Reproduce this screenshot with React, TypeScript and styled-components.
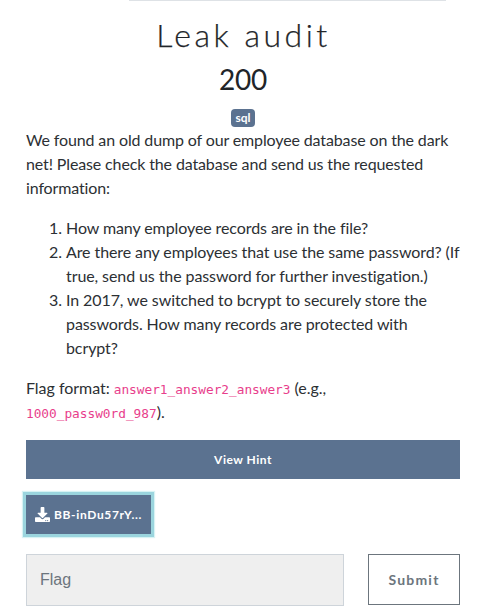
import React from "react";
import styled, { createGlobalStyle } from "styled-components";
import { FaDownload } from "react-icons/fa";

const GlobalStyle = createGlobalStyle`
  *, *::before, *::after { box-sizing: border-box; }
  body {
    margin: 0;
    background: #fff;
    color: #212529;
    font: 400 16px/24px Lato, sans-serif;
    overflow: hidden;
  }
`;

const Page = styled.main`
  display: flex;
  flex-direction: column;
  width: 482px;
  height: 611px;
  padding: 0 22px 0 26px;
  overflow: hidden;
`;

const TabRule = styled.hr`
  flex: none;
  width: 317px;
  height: 1px;
  margin: 0 0 0 103px;
  border: 0;
  background: #dee2e6;
`;

const Header = styled.header`
  display: flex;
  flex-direction: column;
  align-items: center;
  height: 127px;
`;

const Title = styled.h2`
  margin: 15px 0 0;
  font: 300 32px/38px Lato, sans-serif;
  letter-spacing: 3.5px;
  padding-left: 1px;
  -webkit-text-stroke: 0.25px #212529;
`;

const Points = styled.h3`
  margin: 8px 0 0;
  font: 400 28px/34px Lato, sans-serif;
  letter-spacing: -0.3px;
`;

const Tag = styled.span`
  height: 18px;
  margin-top: 13px;
  padding: 0 4px;
  border-radius: 4px;
  background: #5b7290;
  color: #fff;
  font: 700 12px/18px Lato, sans-serif;
`;

const Paragraph = styled.p<{ $spacing?: string }>`
  margin: 0 0 16px;
  color: #2c3034;
  letter-spacing: ${(p) => p.$spacing ?? "-0.13px"};
  white-space: nowrap;
`;

const Questions = styled.ol`
  margin: 0 0 16px;
  padding-left: 40px;
  color: #2c3034;
  letter-spacing: -0.09px;
  white-space: nowrap;
`;

const Code = styled.code`
  color: #e83e8c;
  font: 12.8px/1 "DejaVu Sans Mono", monospace;
  letter-spacing: -0.02px;
`;

const FilledButton = styled.button<{ $focused?: boolean }>`
  display: flex;
  align-items: center;
  justify-content: center;
  flex: none;
  align-self: ${(p) => (p.$focused ? "flex-start" : "stretch")};
  width: ${(p) => (p.$focused ? "125px" : "auto")};
  height: 39px;
  margin: 0;
  padding: 0;
  border: 0;
  background: #5b7290;
  box-shadow: ${(p) => (p.$focused ? "0 0 0 3px #9bd5de, 0 0 1px 4px #d8f3f4" : "none")};
  color: #fff;
  font: 700 12px/18px Lato, sans-serif;
  letter-spacing: ${(p) => (p.$focused ? "0.65px" : "0.5px")};
  white-space: nowrap;
`;

const DownloadIcon = styled(FaDownload)`
  width: 15px;
  height: 15px;
  margin-right: 4px;
`;

const FileRow = styled.div`
  display: flex;
  margin: 16px 0 20px;
`;

const Form = styled.form`
  display: flex;
  align-items: flex-start;
  justify-content: space-between;
`;

const FlagInput = styled.input`
  width: 318px;
  height: 52px;
  padding: 0 13px;
  border: 1px solid #ced4da;
  border-radius: 0;
  background: #efefef;
  font: 16px "Liberation Sans", Arial, sans-serif;
  &::placeholder { color: #6c757d; opacity: 1; }
`;

const SubmitButton = styled.button`
  width: 92px;
  height: 51px;
  padding: 1px 0 0;
  border: 1px solid #6c757d;
  background: #fff;
  color: #6c757d;
  font: 700 14px/20px Lato, sans-serif;
  letter-spacing: 1.2px;
`;

export default function App() {
  return (
    <>
      <GlobalStyle />
      <Page>
        <TabRule />
        <Header>
          <Title>Leak audit</Title>
          <Points>200</Points>
          <Tag>sql</Tag>
        </Header>
        <Paragraph>
          We found an old dump of our employee database on the dark<br />
          net! Please check the database and send us the requested<br />
          information:
        </Paragraph>
        <Questions>
          <li>How many employee records are in the file?</li>
          <li>
            Are there any employees that use the same password? (If<br />
            true, send us the password for further investigation.)
          </li>
          <li>
            In 2017, we switched to bcrypt to securely store the<br />
            passwords. How many records are protected with<br />
            bcrypt?
          </li>
        </Questions>
        <Paragraph $spacing="-0.03px">
          Flag format: <Code>answer1_answer2_answer3</Code> (e.g.,<br />
          <Code>1000_passw0rd_987</Code>).
        </Paragraph>
        <FilledButton type="button">View Hint</FilledButton>
        <FileRow>
          <FilledButton type="button" $focused>
            <DownloadIcon />
            BB-inDu57rY...
          </FilledButton>
        </FileRow>
        <Form>
          <FlagInput placeholder="Flag" aria-label="Flag" />
          <SubmitButton type="button">Submit</SubmitButton>
        </Form>
      </Page>
    </>
  );
}
